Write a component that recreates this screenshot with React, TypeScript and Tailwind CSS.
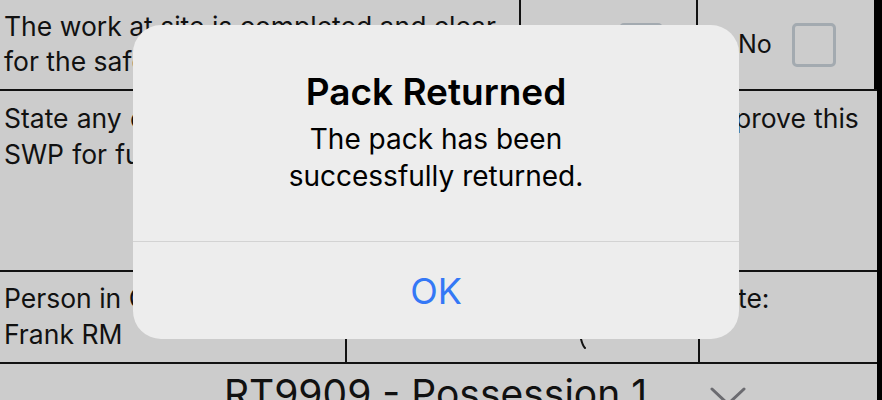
const font = { fontFamily: "Inter, 'Noto Sans', sans-serif" };

const Checkbox = () => (
  <div className="w-[44px] h-[44px] rounded-[5px] border-[3px] border-[#a3aab0]" />
);

const Chevron = () => (
  <svg width="36" height="20" viewBox="0 0 36 20" className="absolute left-[710px] top-[23px]">
    <polyline points="2,2 18,17 34,2" fill="none" stroke="#6b6b70" strokeWidth="3" strokeLinecap="round" />
  </svg>
);

// little tail of the handwritten signature that shows under the alert
const SignatureStroke = () => (
  <svg width="10" height="14" viewBox="0 0 10 14" className="absolute left-[232px] top-[66px]">
    <path d="M2 1 C3 5 4 8 6 10" fill="none" stroke="#111" strokeWidth="2" strokeLinecap="round" />
  </svg>
);

const PackReturnedAlert = () => (
  <div className="absolute left-[133px] top-[25px] w-[606px] h-[314px] rounded-[28px] bg-[#ededed] flex flex-col overflow-hidden">
    <div className="h-[216px] flex flex-col items-center pt-[45px] text-black">
      <h1 className="text-[37px] leading-[44px] font-semibold">Pack Returned</h1>
      <p className="mt-[7px] text-[28px] leading-[37px] text-center">
        The pack has been
        <br />
        successfully returned.
      </p>
    </div>
    <div className="h-px bg-[#d3d3d3]" />
    <button className="flex-1 flex items-center justify-center text-[36px] text-[#3478f6]">OK</button>
  </div>
);

const App = () => {
  return (
    <div className="relative w-[882px] h-[400px] bg-black overflow-hidden text-[#111]" style={font}>
      <div className="w-[877px] flex flex-col">
        <div className="w-[874px] h-[89px] flex bg-[#cccccc]">
          <div className="w-[521px] border-r-2 border-[#111] pl-1 pt-[9px] text-[26.5px] leading-[35px] whitespace-nowrap overflow-hidden">
            The work at site is completed and clear
            <br />
            for the safe return of the line
          </div>
          <div className="w-[177px] border-r-2 border-[#111] flex items-center justify-end pr-[33px] gap-3 text-[25px]">
            <span>Yes</span>
            <Checkbox />
          </div>
          <div className="flex-1 flex items-center pl-[40px] gap-[20px] text-[25px]">
            <span>No</span>
            <Checkbox />
          </div>
        </div>
        <div className="h-[183px] bg-[#cccccc] border-y-2 border-[#111] pl-1 pt-[9px] text-[26.5px] leading-[36px] whitespace-nowrap [word-spacing:0.7px]">
          State any conditions or restrictions that must be met to approve this
          <br />
          SWP for further use:
        </div>
        <div className="h-[92px] flex bg-[#cccccc] border-b-2 border-[#111] text-[26.5px] leading-[36px]">
          <div className="w-[347px] border-r-2 border-[#111] pl-1 pt-[8px]">
            Person in Charge:
            <br />
            Frank RM
          </div>
          <div className="relative w-[353px] border-r-2 border-[#111] pl-1 pt-[8px]">
            Signature:
            <SignatureStroke />
          </div>
          <div className="flex-1 pl-1 pt-[8px]">Date:</div>
        </div>
        <div className="relative h-[60px] bg-[#cccccc] flex justify-center pt-[7px] pr-[6px]">
          <span className="text-[39px] leading-[46px]">RT9909 - Possession 1</span>
          <Chevron />
        </div>
      </div>
      <PackReturnedAlert />
    </div>
  );
};

export default App;
